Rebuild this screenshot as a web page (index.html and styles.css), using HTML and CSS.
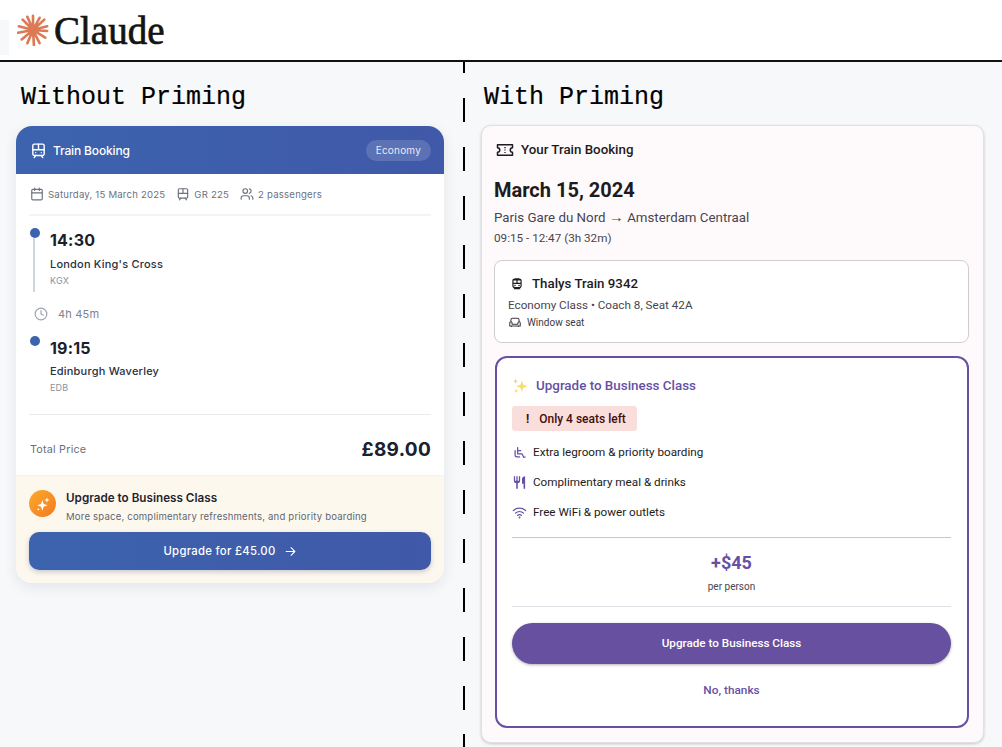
FILE: index.html
```html
<!DOCTYPE html>
<html>
<head>
<meta charset="utf-8">
<title>Priming comparison</title>
<link rel="stylesheet" href="styles.css">
</head>
<body>
<header class="top">
  <svg class="logo-mark" width="32" height="32" viewBox="0 0 34 34" fill="none" stroke="#dc7a55" stroke-width="2.8" stroke-linecap="round">
    <path d="M17 17L17 2M17 17L24 4M17 17L29 6M17 17L32 13M17 17L32 18M17 17L30 25M17 17L24 31M17 17L18 33M17 17L11 31M17 17L5 27M17 17L1 20M17 17L2 13M17 17L6 6M17 17L11 3"/>
  </svg>
  <span class="logo-text">Claude</span>
</header>

<main class="compare">
  <section class="col col-a">
    <h2 class="col-title">Without Priming</h2>
    <div class="card-a">
      <div class="a-head">
        <svg class="ic" width="17" height="17" viewBox="0 0 24 24" fill="none" stroke="#fff" stroke-width="2" stroke-linecap="round" stroke-linejoin="round"><rect x="4" y="3" width="16" height="16" rx="2"/><path d="M4 11h16M12 3v8M8 19l-2 3M16 19l2 3M8 15h.01M16 15h.01"/></svg>
        <span class="a-head-title">Train Booking</span>
        <span class="a-badge">Economy</span>
      </div>
      <div class="a-body">
        <div class="a-meta">
          <svg width="14" height="14" viewBox="0 0 24 24" fill="none" stroke="#6b7280" stroke-width="2" stroke-linecap="round" stroke-linejoin="round"><rect x="3" y="4" width="18" height="18" rx="2"/><path d="M16 2v4M8 2v4M3 10h18"/></svg>
          <span class="m-text">Saturday, 15 March 2025</span>
          <svg class="m-gap" width="14" height="14" viewBox="0 0 24 24" fill="none" stroke="#6b7280" stroke-width="2" stroke-linecap="round" stroke-linejoin="round"><rect x="4" y="3" width="16" height="16" rx="2"/><path d="M4 11h16M12 3v8M8 19l-2 3M16 19l2 3"/></svg>
          <span class="m-text">GR 225</span>
          <svg class="m-gap" width="14" height="14" viewBox="0 0 24 24" fill="none" stroke="#6b7280" stroke-width="2" stroke-linecap="round" stroke-linejoin="round"><path d="M16 21v-2a4 4 0 0 0-4-4H6a4 4 0 0 0-4 4v2"/><circle cx="9" cy="7" r="4"/><path d="M22 21v-2a4 4 0 0 0-3-3.9M16 3.1a4 4 0 0 1 0 7.8"/></svg>
          <span class="m-text">2 passengers</span>
        </div>

        <div class="stop stop-from">
          <span class="dot"></span>
          <span class="rail"></span>
          <div class="time">14:30</div>
          <div class="station">London King's Cross</div>
          <div class="code">KGX</div>
        </div>
        <div class="duration">
          <svg width="14" height="14" viewBox="0 0 24 24" fill="none" stroke="#9ca3af" stroke-width="2" stroke-linecap="round" stroke-linejoin="round"><circle cx="12" cy="12" r="10"/><path d="M12 6v6l4 2"/></svg>
          <span>4h 45m</span>
        </div>
        <div class="stop">
          <span class="dot"></span>
          <div class="time">19:15</div>
          <div class="station">Edinburgh Waverley</div>
          <div class="code">EDB</div>
        </div>

        <div class="total">
          <span class="total-label">Total Price</span>
          <span class="total-price">£89.00</span>
        </div>
      </div>
      <div class="a-upgrade">
        <div class="a-up-row">
          <span class="a-up-icon">
            <svg width="16" height="16" viewBox="0 0 24 24" fill="#fff"><path d="M11 6l2 6 6 2-6 2-2 6-2-6-6-2 6-2z"/><path d="M18 2l1 3 3 1-3 1-1 3-1-3-3-1 3-1z"/><circle cx="5" cy="20" r="1.4"/></svg>
          </span>
          <div>
            <div class="a-up-title">Upgrade to Business Class</div>
            <div class="a-up-sub">More space, complimentary refreshments, and priority boarding</div>
          </div>
        </div>
        <div class="a-btn">
          <span>Upgrade for £45.00</span>
          <svg width="13" height="13" viewBox="0 0 24 24" fill="none" stroke="#fff" stroke-width="2" stroke-linecap="round" stroke-linejoin="round"><path d="M4 12h16M13 5l7 7-7 7"/></svg>
        </div>
      </div>
    </div>
  </section>

  <div class="split"></div>

  <section class="col col-b">
    <h2 class="col-title">With Priming</h2>
    <div class="card-b">
      <div class="b-head">
        <svg width="18" height="18" viewBox="0 0 24 24" fill="none" stroke="#1d1b20" stroke-width="2" stroke-linejoin="round"><path d="M2 5h20v4a3 3 0 0 0 0 6v4H2v-4a3 3 0 0 0 0-6z"/><path d="M12 8v1.500M12 11.200v1.600M12 14.500V16" stroke-width="1.800"/></svg>
        <span>Your Train Booking</span>
      </div>
      <div class="b-date">March 15, 2024</div>
      <div class="b-route">Paris Gare du Nord <span class="b-arrow">→</span> Amsterdam Centraal</div>
      <div class="b-hours">09:15 - 12:47 (3h 32m)</div>

      <div class="b-train">
        <div class="b-train-name">
          <svg width="14" height="14" viewBox="0 0 24 24" fill="#1d1b20"><path fill-rule="evenodd" d="M12 2c-4 0-8 .5-8 4v9.500C4 17.430 5.570 19 7.500 19L6 20.500V21h12v-.5L16.500 19c1.930 0 3.500-1.570 3.500-3.500V6c0-3.500-4-4-8-4zM6 6h5v4H6zm7 0h5v4h-5zM6 12h12v3.500c0 .83-.67 1.500-1.500 1.500h-9C6.670 17 6 16.330 6 15.500z"/><circle cx="8.500" cy="14.500" r="1.400"/><circle cx="15.500" cy="14.500" r="1.400"/></svg>
          <span>Thalys Train 9342</span>
        </div>
        <div class="b-train-class">Economy Class • Coach 8, Seat 42A</div>
        <div class="b-train-seat">
          <svg width="14" height="14" viewBox="0 0 24 24" fill="none" stroke="#3d3a42" stroke-width="1.800" stroke-linejoin="round"><path d="M5 10V7a3 3 0 0 1 3-3h8a3 3 0 0 1 3 3v3"/><path d="M7 14v-2a2 2 0 1 0-4 0v5h18v-5a2 2 0 1 0-4 0v2z"/><path d="M6 17v2M18 17v2"/></svg>
          <span>Window seat</span>
        </div>
      </div>

      <div class="b-offer">
        <div class="b-offer-title">
          <svg width="17" height="17" viewBox="0 0 24 24" fill="#f7dc6f"><path d="M14 5l2 6 6 2-6 2-2 6-2-6-6-2 6-2z"/><path d="M5 2l1 3 2 1-2 1-1 3-1-3-2-1 2-1z" fill="#f5d36b"/><path d="M6 17l.8 2 2 .800-2 .800-.8 2-.8-2-2-.800 2-.800z" fill="#f5d36b"/></svg>
          <span>Upgrade to Business Class</span>
        </div>
        <div class="b-alert"><span class="b-alert-mark">!</span><span>Only 4 seats left</span></div>
        <ul class="b-list">
          <li>
            <svg width="15" height="15" viewBox="0 0 24 24" fill="none" stroke="#6750a4" stroke-width="2" stroke-linecap="round" stroke-linejoin="round"><path d="M9 4v10h7l3 6 2-.8"/><path d="M9 9h5"/><path d="M5 9v7a3 3 0 0 0 3 3h4"/></svg>
            <span>Extra legroom &amp; priority boarding</span>
          </li>
          <li>
            <svg width="15" height="15" viewBox="0 0 24 24" fill="#6750a4"><path d="M11 9H9V2H7v7H5V2H3v7c0 2.120 1.660 3.840 3.750 3.970V22h2.500v-9.030C11.340 12.840 13 11.120 13 9V2h-2v7zm5-3v8h2.500v8H21V2c-2.760 0-5 2.240-5 4z"/></svg>
            <span>Complimentary meal &amp; drinks</span>
          </li>
          <li>
            <svg width="15" height="15" viewBox="0 0 24 24" fill="none" stroke="#6750a4" stroke-width="2" stroke-linecap="round"><path d="M2 9a15 15 0 0 1 20 0M5.500 13a10 10 0 0 1 13 0M9 16.500a5 5 0 0 1 6 0"/><circle cx="12" cy="20" r=".6" fill="#6750a4"/></svg>
            <span>Free WiFi &amp; power outlets</span>
          </li>
        </ul>
        <div class="b-price">
          <div class="b-amount">+$45</div>
          <div class="b-per">per person</div>
        </div>
        <div class="b-btn">Upgrade to Business Class</div>
        <div class="b-no">No, thanks</div>
      </div>
    </div>
  </section>
</main>
</body>
</html>
```

FILE: styles.css
```css
* { box-sizing: border-box; }
html, body { margin: 0; padding: 0; }
body {
  width: 1002px;
  height: 747px;
  overflow: hidden;
  background: #f7f8fa;
  font-family: "Inter", "Liberation Sans", sans-serif;
}

.top {
  height: 62px;
  display: flex;
  align-items: center;
  gap: 5px;
  padding: 0 0 0 17px;
  background: linear-gradient(#f7f8fa, #f7f8fa) 0 20px / 9px 35px no-repeat, #fff;
  border-bottom: 2px solid #111;
}
.logo-mark { flex: none; }
.logo-text {
  font-family: "Liberation Serif", serif;
  font-size: 39px;
  color: #141413;
  -webkit-text-stroke: .7px #141413;
}

.compare { display: flex; height: 685px; }
.col-a { width: 463px; padding-left: 16px; }
.col-b { flex: 1; padding-left: 16px; }
.split {
  width: 2px;
  flex: none;
  background: repeating-linear-gradient(#000 0, #000 24px, transparent 24px, transparent 49px) 0 -13px;
}
.col-title {
  margin: 0;
  height: 64px;
  padding: 21px 0 0 5px;
  font-family: "Liberation Mono", monospace;
  font-size: 25px;
  line-height: 30px;
  font-weight: 400;
  color: #000;
  -webkit-text-stroke: .2px #000;
}
.col-b .col-title { padding-left: 3px; }

/* left card */
.card-a {
  width: 428px;
  height: 457px;
  border-radius: 16px;
  background: #fff;
  overflow: hidden;
  box-shadow: 0 4px 14px rgba(20, 30, 60, .09);
}
.a-head {
  height: 48px;
  display: flex;
  align-items: center;
  padding: 0 13px 0 14px;
  background: linear-gradient(90deg, #3c63ae, #4059a8);
  color: #fff;
}
.a-head-title { margin-left: 6px; font-size: 12px; letter-spacing: -.15px; font-weight: 500; flex: 1; }
.a-badge {
  height: 21px;
  line-height: 21px;
  padding: 0 10px;
  border-radius: 11px;
  background: rgba(255, 255, 255, .15);
  font-size: 10px;
  color: #e6eaf5;
  letter-spacing: .2px;
}
.a-body { height: 301px; padding: 0 13px; }
.a-meta {
  height: 42px;
  padding-left: 1px;
  display: flex;
  align-items: center;
  gap: 4px;
  border-bottom: 2px solid #f3f4f6;
  font-size: 9.600px;
  color: #6b7280;
  letter-spacing: .2px;
}
.m-gap { margin-left: 7px; }

.stop { position: relative; padding-left: 21px; padding-top: 13px; color: #1a202c; }
.stop-from { height: 88px; }
.dot {
  position: absolute;
  left: 1px;
  top: 12px;
  width: 10px;
  height: 10px;
  border-radius: 50%;
  background: #3c63ae;
}
.rail { position: absolute; left: 4px; top: 22px; width: 2px; height: 54px; background: #cfd5e0; }
.time { font-size: 16px; line-height: 22px; font-weight: 700; letter-spacing: .2px; }
.station { margin-top: 4px; font-size: 11px; line-height: 16px; font-weight: 500; letter-spacing: .2px; color: #2a3040; }
.stop-from .station { margin-top: 5px; }
.code { margin-top: 1px; font-size: 9px; line-height: 16px; color: #8a92a0; letter-spacing: .2px; }
.duration {
  height: 20px;
  display: flex;
  align-items: center;
  gap: 10px;
  padding-left: 5px;
  font-size: 11px;
  color: #7b8290;
  letter-spacing: .2px;
}
.total {
  margin-top: 18px;
  height: 61px;
  padding: 8px 0 0 1px;
  display: flex;
  align-items: center;
  justify-content: space-between;
  border-top: 1px solid #e8eaee;
}
.total-label { font-size: 10.800px; color: #667080; letter-spacing: .2px; }
.total-price { font-size: 19px; font-weight: 700; color: #1a202c; letter-spacing: .3px; }

.a-upgrade { height: 108px; padding: 14px 13px 0; background: #fdf8ee; border-top: 1px solid #fbf3df; }
.a-up-row { display: flex; gap: 10px; }
.a-up-icon {
  width: 27px;
  height: 27px;
  flex: none;
  border-radius: 50%;
  display: flex;
  align-items: center;
  justify-content: center;
  background: linear-gradient(135deg, #fbab2d, #f4791f);
}
.a-up-title { font-size: 11.700px; line-height: 16px; font-weight: 600; color: #1f2430; }
.a-up-sub { margin-top: 4px; font-size: 9.550px; line-height: 14px; color: #5f6672; letter-spacing: .2px; }
.a-btn {
  height: 38px;
  margin-top: 8px;
  display: flex;
  align-items: center;
  justify-content: center;
  gap: 8px;
  border-radius: 10px;
  background: linear-gradient(90deg, #3c63ae, #4059a8);
  color: #fff;
  font-size: 11.300px;
  font-weight: 500;
  letter-spacing: .3px;
  box-shadow: 0 2px 5px rgba(40, 60, 120, .25);
}

/* right card */
.card-b {
  width: 503px;
  height: 618px;
  margin-top: -1px;
  padding: 0 14px 0 12px;
  border: 1px solid #e2e0e4;
  border-radius: 10px;
  background: #fefafb;
  box-shadow: 0 1px 3px rgba(0, 0, 0, .2);
  font-family: "Roboto", "Liberation Sans", sans-serif;
  color: #1d1b20;
}
.b-head {
  height: 47px;
  display: flex;
  align-items: center;
  gap: 7px;
  padding-left: 2px;
  font-size: 13.300px;
  font-weight: 500;
}
.b-date { margin-top: 4px; font-size: 20px; line-height: 26px; font-weight: 700; }
.b-route { margin-top: 4px; font-size: 13.300px; line-height: 20px; color: #49454f; }
.b-arrow { font-size: 15px; }
.b-hours { margin-top: 1px; font-size: 11.700px; line-height: 18px; color: #49454f; }
.b-train {
  height: 83px;
  margin-top: 13px;
  padding: 13px 13px 0;
  background: #fff;
  border: 1px solid #cfcdd2;
  border-radius: 8px;
}
.b-train-name { display: flex; align-items: center; gap: 8px; font-size: 13.300px; line-height: 20px; font-weight: 500; padding-left: 2px; }
.b-train-class { margin-top: 2px; font-size: 11.700px; line-height: 18px; color: #49454f; }
.b-train-seat { margin-top: 1px; display: flex; align-items: center; gap: 5px; font-size: 10px; line-height: 16px; color: #3d3a42; }

.b-offer {
  height: 372px;
  margin: 13px 0 0 1px;
  padding: 0 16px 0 15px;
  background: #fff;
  border: 2px solid #6750a4;
  border-radius: 12px;
}
.b-offer-title {
  height: 54px;
  display: flex;
  align-items: center;
  gap: 7px;
  font-size: 13.400px;
  font-weight: 500;
  color: #6750a4;
}
.b-alert {
  width: 125px;
  height: 25px;
  margin-top: -6px;
  display: flex;
  align-items: center;
  gap: 10px;
  padding-left: 14px;
  border-radius: 3px;
  background: #f9dedc;
  font-size: 12px;
  font-weight: 500;
  color: #410e0b;
}
.b-alert-mark { font-weight: 700; }
.b-list { list-style: none; margin: 6px 0 0; padding: 0 0 10px; border-bottom: 1px solid #c9c5cf; }
.b-list li { height: 30px; display: flex; align-items: center; gap: 6px; font-size: 11.700px; color: #1d1b20; }
.b-price { height: 69px; padding-top: 13px; text-align: center; border-bottom: 1px solid #e2e0e6; }
.b-amount { font-size: 18px; line-height: 24px; font-weight: 700; color: #6750a4; }
.b-per { margin-top: 5px; font-size: 10px; line-height: 14px; color: #49454f; }
.b-btn {
  height: 41px;
  margin-top: 16px;
  border-radius: 21px;
  background: #67509f;
  color: #fff;
  text-align: center;
  line-height: 41px;
  font-size: 11.700px;
  font-weight: 500;
  box-shadow: 0 1px 3px rgba(0, 0, 0, .3);
}
.b-no { margin-top: 17px; text-align: center; font-size: 11.800px; line-height: 18px; font-weight: 500; color: #6750a4; }
```
